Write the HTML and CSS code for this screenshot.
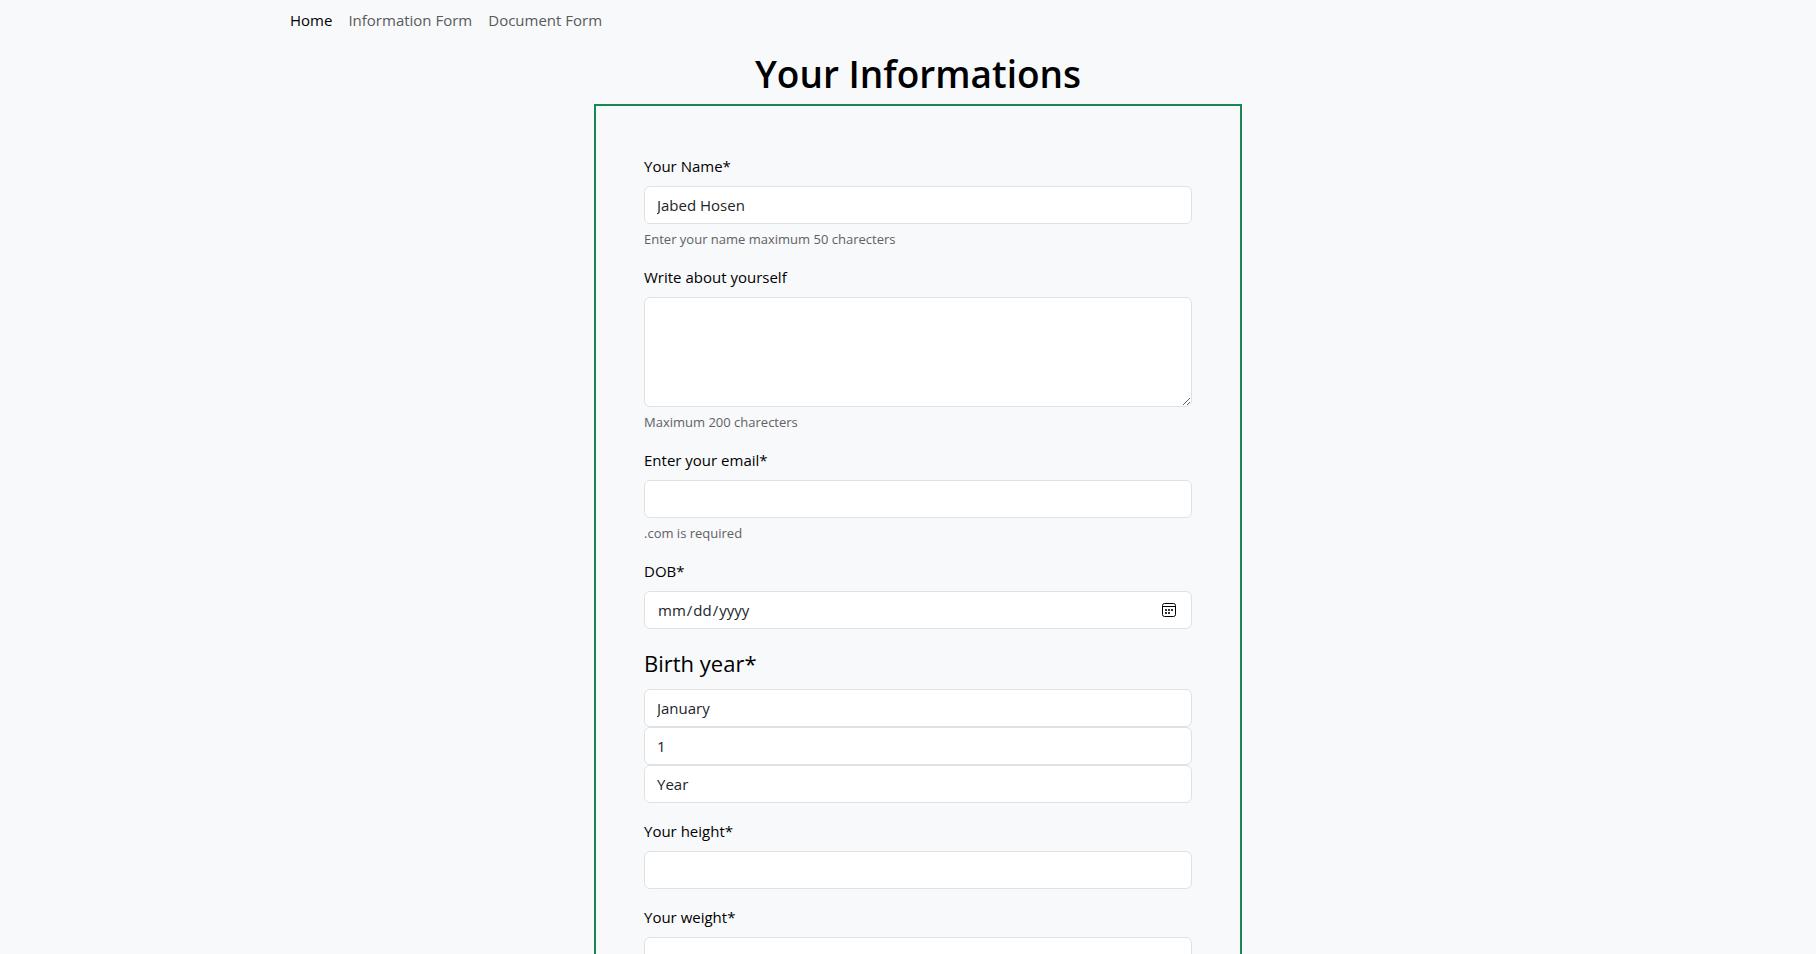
FILE: index.html
```
<!DOCTYPE html>
<html lang="en">
<head>
<meta charset="utf-8">
<meta name="viewport" content="width=device-width, initial-scale=1">
<title>Your Informations</title>
<link rel="stylesheet" href="styles.css">
</head>
<body>
<div class="container">
  <nav class="nav">
    <a class="nav-link active" href="#">Home</a>
    <a class="nav-link" href="#">Information Form</a>
    <a class="nav-link" href="#">Document Form</a>
  </nav>
  <main>
    <h1 class="title">Your Informations</h1>
    <form class="form">
      <div class="field">
        <label class="label" for="name">Your Name*</label>
        <input class="control" id="name" type="text" value="Jabed Hosen">
        <div class="help">Enter your name maximum 50 charecters</div>
      </div>
      <div class="field">
        <label class="label" for="about">Write about yourself</label>
        <textarea class="control about" id="about"></textarea>
        <div class="help">Maximum 200 charecters</div>
      </div>
      <div class="field">
        <label class="label" for="email">Enter your email*</label>
        <input class="control" id="email" type="email">
        <div class="help">.com is required</div>
      </div>
      <div class="field">
        <label class="label" for="dob">DOB*</label>
        <input class="control date" id="dob" type="date">
      </div>
      <div class="field">
        <label class="label label-large" for="month">Birth year*</label>
        <select class="control" id="month"><option>January</option></select>
        <select class="control" aria-label="Day"><option>1</option></select>
        <select class="control" aria-label="Year"><option>Year</option></select>
      </div>
      <div class="field">
        <label class="label" for="height">Your height*</label>
        <input class="control" id="height" type="text">
      </div>
      <div class="field">
        <label class="label" for="weight">Your weight*</label>
        <input class="control" id="weight" type="text">
      </div>
    </form>
  </main>
</div>
</body>
</html>
```
FILE: styles.css
```
* {
  box-sizing: border-box;
}

body {
  margin: 0;
  padding-left: 20px;
  background: #f8f9fb;
  color: #000;
  font-family: "Segoe UI", "Open Sans", "Noto Sans", sans-serif;
  font-size: 15px;
  line-height: 24px;
}

.container {
  max-width: 1320px;
  margin: 0 auto;
  padding: 0 12px;
}

.nav {
  display: flex;
  gap: 16px;
  padding: 8px 20px;
}

.nav-link {
  color: #595a5b;
  text-decoration: none;
}

.nav-link.active {
  color: #000;
}

.title {
  margin: 10px 0 6px;
  font-size: 37px;
  font-weight: 600;
  line-height: 48px;
  text-align: center;
}

.form {
  width: 50%;
  margin: 0 auto;
  padding: 48px;
  border: 2px solid #198754;
}

.field {
  margin-bottom: 16px;
}

.label {
  display: block;
  margin-bottom: 8px;
}

.label-large {
  font-size: 22px;
  line-height: 36px;
}

.control {
  display: block;
  width: 100%;
  height: 38px;
  margin: 0;
  padding: 6px 12px;
  border: 1px solid #dee2e6;
  border-radius: 6px;
  background: #fff;
  color: #212529;
  font: inherit;
  appearance: none;
}

.about {
  height: 110px;
  resize: vertical;
}

.date::-webkit-calendar-picker-indicator {
  box-sizing: border-box;
  width: 20px;
  height: 20px;
  padding: 0;
  background: url("data:image/svg+xml,%3Csvg xmlns='http://www.w3.org/2000/svg' viewBox='0 0 20 20'%3E%3Crect x='3.5' y='3.5' width='13' height='13' rx='2' fill='none' stroke='%23000'/%3E%3Cpath d='M3 6.5h14' stroke='%23000'/%3E%3Cpath d='M6 9h2v2H6zM9 9h2v2H9zM12 9h2v2h-2zM6 12h2v2H6zM9 12h2v2H9z' fill='%23333'/%3E%3C/svg%3E") center / 20px 20px no-repeat;
}

.help {
  margin-top: 5px;
  color: #5f6164;
  font-size: 13px;
  line-height: 20px;
}
```
